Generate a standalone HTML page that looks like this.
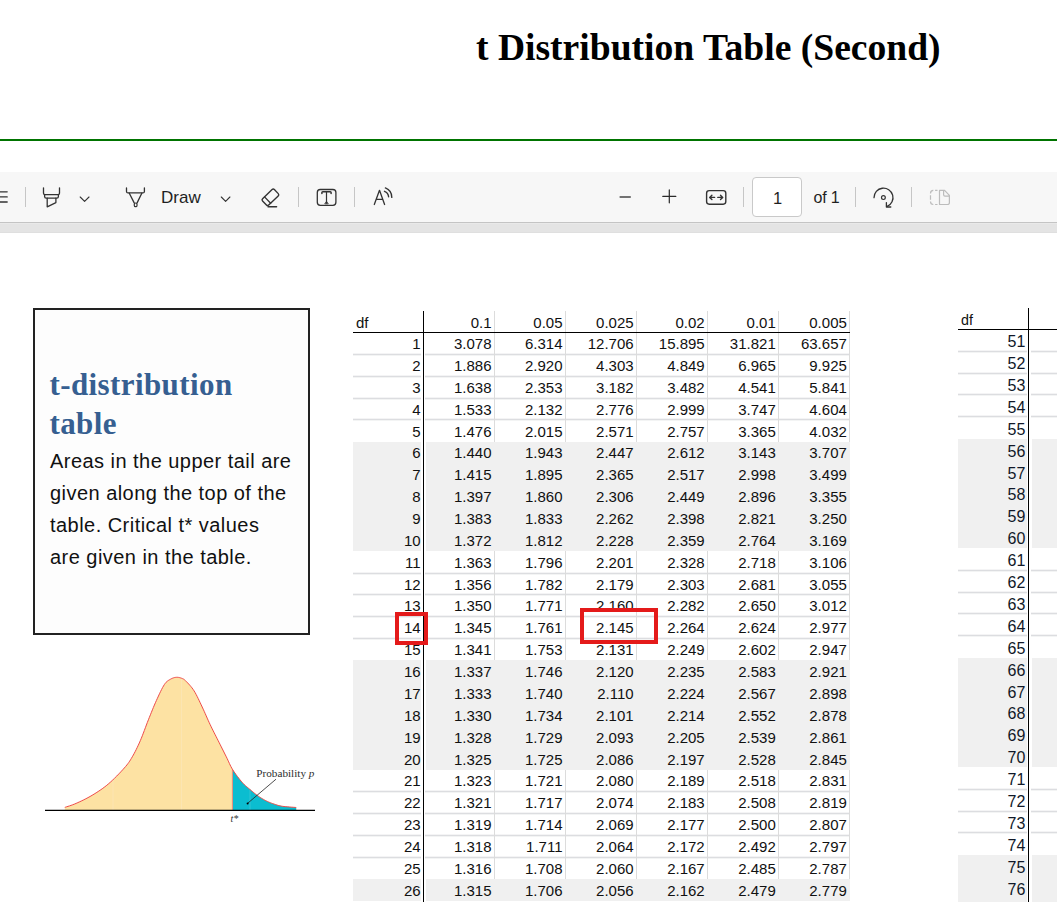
<!DOCTYPE html><html><head><meta charset="utf-8"><title>t Distribution Table (Second)</title><style>
*{margin:0;padding:0;box-sizing:border-box}
html,body{width:1057px;height:902px;overflow:hidden;background:#fff}
body{position:relative;font-family:"Liberation Sans",sans-serif;color:#000}
.a{position:absolute}
.t{position:absolute;white-space:pre;line-height:1}
.sep{position:absolute;width:1px;height:20px;top:187px;background:#c6c6c6}
.cell{position:absolute;white-space:pre;font-size:15px;line-height:16px;text-align:right;color:#111}
</style></head><body>
<div class="t" style="left:476px;top:26px;font:bold 37.6px/43px 'Liberation Serif',serif;color:#000">t Distribution Table (Second)</div>
<div class="a" style="left:0;top:139px;width:1057px;height:2px;background:#007400"></div>
<div class="a" style="left:0;top:172px;width:1057px;height:50px;background:#f7f7f7"></div>
<div class="a" style="left:0;top:222px;width:1057px;height:1px;background:#c4c4c4"></div>
<div class="a" style="left:0;top:223px;width:1057px;height:10px;background:#e4e4e4;border-top:1px solid #e9e9e9;border-bottom:1px solid #dfdfdf"></div>
<svg class="a" style="left:0;top:172px" width="1057" height="50" viewBox="0 172 1057 50" fill="none" stroke="#333333" stroke-width="1.3" stroke-linecap="round" stroke-linejoin="round">
<path d="M-3 191.8H7.2M-3 196.9H7.2M-3 202H7.2"/>
<path d="M43.5 187.8V193.2Q43.5 194.6 45 194.6H58Q59.5 194.6 59.5 193.2V187.8"/>
<path d="M44.6 194.6V196.6Q44.6 198.2 46.2 198.2H56.8Q58.4 198.2 58.4 196.6V194.6"/>
<path d="M47.2 198.2V206.8L55.9 202.6V198.2"/>
<path d="M80.2 197L84.6 201.4L89 197" stroke-width="1.1"/>
<path d="M126.5 187.9V191.4Q126.5 192.9 128 192.9H142.9Q144.4 192.9 144.4 191.4V187.9"/>
<path d="M129.3 193.2L134.2 202.9M141.8 193.2L137.1 202.9"/>
<rect x="134.3" y="203" width="2.7" height="3.7" rx="1.3" stroke-width="1.2"/>
<path d="M221.3 197L225.6 201.3L229.9 197" stroke-width="1.1"/>
<g transform="translate(270.4 197.3) rotate(-44)"><rect x="-8.2" y="-4.4" width="16.4" height="8.8" rx="1.6" stroke-width="1.4"/><path d="M-3.9 -4.4V4.4" stroke-width="1.3"/></g>
<path d="M268 206.8H276.6" stroke-width="1.4"/>
<rect x="317.3" y="189.5" width="18.6" height="15.8" rx="3"/>
<path d="M321.9 193.4V192.6Q321.9 191.7 322.8 191.7H330.3Q331.1 191.7 331.1 192.6V193.4" stroke-width="1.5"/><path d="M326.5 191.7V203.2" stroke-width="1.2"/><path d="M325 203.5L326.5 201.3L328 203.5Z" stroke-width="0.9"/>
<path d="M374.3 204.5L379.5 190.3L384.6 204.5M376.3 199.3H382.6" stroke-width="1.3"/>
<path d="M384.5 191.3A6.4 6.4 0 0 1 388.6 196.7M385.4 187.9A10.2 10.2 0 0 1 391.8 197.4" stroke-width="1.4"/>
<path d="M619.6 197H630.8" stroke="#5a5a5a" stroke-width="1.7" stroke-linecap="butt"/>
<path d="M662.8 196.4H675.8M669.3 189.9V202.8" stroke="#2a2a2a" stroke-width="1.2"/>
<rect x="706.6" y="190.6" width="19.2" height="13.6" rx="2.6" stroke-width="1.4"/>
<path d="M709.8 197.4H714.6M711.9 195.2L709.7 197.4L711.9 199.6M717.8 197.4H722.6M720.5 195.2L722.7 197.4L720.5 199.6" stroke-width="1.4"/>
<path d="M874 197.7A9.5 9.5 0 1 1 887.2 206.4" stroke-width="1.3"/>
<path d="M886.4 202.6V207H890.8" stroke-width="1.3"/>
<circle cx="883.4" cy="197.6" r="1.9" stroke-width="1.2"/>
<path d="M930.5 193.5Q930.5 190.4 933.3 190.4M935.1 190.4H937.5M930.5 195.2V199.8M930.5 201.5Q930.5 204.5 933.3 204.5M935.1 204.5H937.5" stroke="#bcbcbc" stroke-width="1.2" stroke-linecap="butt"/>
<path d="M939.5 190.4H944.6L949.4 195.4V202.4Q949.4 204.5 947.3 204.5H939.5ZM943.6 190.8V194.8Q943.6 196.2 945 196.2H949.2" stroke="#bcbcbc" stroke-width="1.2"/>
</svg>
<div class="sep" style="left:25px"></div>
<div class="sep" style="left:298px"></div>
<div class="sep" style="left:354px"></div>
<div class="sep" style="left:743px"></div>
<div class="sep" style="left:855px"></div>
<div class="sep" style="left:911px"></div>
<div class="t" style="left:161px;top:188px;font-size:17px;line-height:20px;color:#1f1f1f">Draw</div>
<div class="a" style="left:752px;top:177px;width:50px;height:40px;background:#fff;border:1px solid #c9c9c9;border-radius:4px"></div>
<div class="t" style="left:773px;top:188px;font-size:16.5px;line-height:20px;color:#1f1f1f">1</div>
<div class="t" style="left:813.5px;top:188px;font-size:16px;line-height:20px;letter-spacing:-0.15px;color:#1f1f1f">of 1</div>
<div class="a" style="left:33px;top:308px;width:277px;height:326.8px;border:2px solid #222;background:#fdfdfd"></div>
<div class="t" style="left:49.5px;top:365px;font:bold 31px/39px 'Liberation Serif',serif;letter-spacing:0.4px;color:#365f91">t-distribution<br>table</div>
<div class="t" style="left:50px;top:445px;font-size:20px;line-height:32px;letter-spacing:0.46px;color:#111">Areas in the upper tail are<br>given along the top of the<br>table. Critical t* values<br>are given in the table.</div>
<svg class="a" style="left:0;top:660px" width="340" height="170" viewBox="0 660 340 170">
<polygon points="64.8,810 64.80,807.40 65.64,807.12 66.72,806.78 68.00,806.37 69.45,805.91 71.02,805.38 72.68,804.78 74.39,804.12 76.10,803.40 77.87,802.60 79.77,801.74 81.75,800.80 83.80,799.80 85.89,798.74 87.98,797.64 90.06,796.49 92.10,795.30 94.11,794.08 96.12,792.83 98.13,791.54 100.14,790.20 102.16,788.80 104.17,787.32 106.19,785.76 108.20,784.10 110.27,782.29 112.41,780.30 114.59,778.21 116.76,776.05 118.86,773.89 120.84,771.80 122.68,769.81 124.30,768.00 125.69,766.40 126.87,764.97 127.89,763.66 128.81,762.40 129.66,761.14 130.49,759.83 131.36,758.40 132.30,756.80 133.30,755.05 134.30,753.23 135.30,751.33 136.29,749.36 137.29,747.30 138.29,745.18 139.30,742.98 140.30,740.70 141.31,738.31 142.32,735.77 143.33,733.14 144.35,730.45 145.37,727.73 146.38,725.03 147.39,722.37 148.40,719.80 149.40,717.29 150.41,714.79 151.41,712.30 152.41,709.84 153.40,707.43 154.40,705.06 155.40,702.74 156.40,700.50 157.41,698.27 158.44,696.02 159.48,693.79 160.52,691.62 161.54,689.57 162.53,687.67 163.49,685.97 164.40,684.50 165.25,683.30 166.06,682.34 166.84,681.58 167.58,680.97 168.31,680.47 169.03,680.04 169.76,679.63 170.50,679.20 171.25,678.78 172.00,678.42 172.74,678.11 173.48,677.85 174.22,677.64 174.95,677.48 175.68,677.37 176.40,677.30 177.12,677.28 177.86,677.32 178.59,677.41 179.31,677.55 180.02,677.72 180.71,677.93 181.37,678.16 182.00,678.40 182.56,678.63 183.04,678.84 183.48,679.06 183.90,679.32 184.34,679.64 184.84,680.06 185.41,680.60 186.10,681.30 186.91,682.13 187.82,683.08 188.81,684.12 189.85,685.27 190.92,686.53 192.00,687.89 193.07,689.34 194.10,690.90 195.11,692.59 196.12,694.43 197.13,696.39 198.15,698.44 199.17,700.56 200.18,702.71 201.19,704.87 202.20,707.00 203.20,709.15 204.21,711.35 205.21,713.60 206.21,715.86 207.20,718.12 208.20,720.36 209.20,722.56 210.20,724.70 211.20,726.78 212.20,728.82 213.20,730.82 214.19,732.80 215.19,734.77 216.19,736.73 217.20,738.71 218.20,740.70 219.22,742.73 220.26,744.79 221.30,746.87 222.35,748.94 223.38,750.99 224.39,753.00 225.37,754.94 226.30,756.80 227.16,758.57 227.94,760.25 228.68,761.88 229.41,763.46 230.14,765.01 230.91,766.56 231.76,768.11 232.70,769.70 233.76,771.34 234.91,773.04 236.13,774.75 237.39,776.45 238.67,778.11 239.93,779.69 241.15,781.16 242.30,782.50 243.38,783.68 244.43,784.73 245.45,785.68 246.45,786.55 247.44,787.37 248.42,788.17 249.40,788.97 250.40,789.80 251.40,790.65 252.40,791.50 253.40,792.34 254.40,793.16 255.40,793.96 256.40,794.73 257.40,795.48 258.40,796.20 259.41,796.89 260.42,797.55 261.43,798.19 262.45,798.80 263.47,799.39 264.48,799.95 265.49,800.49 266.50,801.00 267.50,801.48 268.51,801.94 269.51,802.37 270.51,802.77 271.50,803.15 272.50,803.51 273.50,803.86 274.50,804.20 275.46,804.52 276.37,804.82 277.25,805.11 278.14,805.38 279.08,805.63 280.10,805.86 281.23,806.09 282.50,806.30 284.03,806.50 285.85,806.69 287.82,806.87 289.85,807.03 291.82,807.18 293.60,807.31 295.10,807.41 296.20,807.50 296.2,810" fill="#fde2a3" stroke="none"/>
<polygon points="232.4,810 232.4,769.19 232.70,769.70 233.76,771.34 234.91,773.04 236.13,774.75 237.39,776.45 238.67,778.11 239.93,779.69 241.15,781.16 242.30,782.50 243.38,783.68 244.43,784.73 245.45,785.68 246.45,786.55 247.44,787.37 248.42,788.17 249.40,788.97 250.40,789.80 251.40,790.65 252.40,791.50 253.40,792.34 254.40,793.16 255.40,793.96 256.40,794.73 257.40,795.48 258.40,796.20 259.41,796.89 260.42,797.55 261.43,798.19 262.45,798.80 263.47,799.39 264.48,799.95 265.49,800.49 266.50,801.00 267.50,801.48 268.51,801.94 269.51,802.37 270.51,802.77 271.50,803.15 272.50,803.51 273.50,803.86 274.50,804.20 275.46,804.52 276.37,804.82 277.25,805.11 278.14,805.38 279.08,805.63 280.10,805.86 281.23,806.09 282.50,806.30 284.03,806.50 285.85,806.69 287.82,806.87 289.85,807.03 291.82,807.18 293.60,807.31 295.10,807.41 296.20,807.50 296.2,810" fill="#0bbdd0" stroke="none"/>
<path d="M113 779.7V810M181.5 678.2V810" stroke="#fbe6b6" stroke-width="0.8"/>
<path d="M250 789.5V810" stroke="#3cc6d6" stroke-width="0.8"/>
<line x1="232.4" y1="769.19" x2="232.4" y2="810" stroke="#f28b7a" stroke-width="1"/>
<polyline points="64.80,807.40 65.64,807.12 66.72,806.78 68.00,806.37 69.45,805.91 71.02,805.38 72.68,804.78 74.39,804.12 76.10,803.40 77.87,802.60 79.77,801.74 81.75,800.80 83.80,799.80 85.89,798.74 87.98,797.64 90.06,796.49 92.10,795.30 94.11,794.08 96.12,792.83 98.13,791.54 100.14,790.20 102.16,788.80 104.17,787.32 106.19,785.76 108.20,784.10 110.27,782.29 112.41,780.30 114.59,778.21 116.76,776.05 118.86,773.89 120.84,771.80 122.68,769.81 124.30,768.00 125.69,766.40 126.87,764.97 127.89,763.66 128.81,762.40 129.66,761.14 130.49,759.83 131.36,758.40 132.30,756.80 133.30,755.05 134.30,753.23 135.30,751.33 136.29,749.36 137.29,747.30 138.29,745.18 139.30,742.98 140.30,740.70 141.31,738.31 142.32,735.77 143.33,733.14 144.35,730.45 145.37,727.73 146.38,725.03 147.39,722.37 148.40,719.80 149.40,717.29 150.41,714.79 151.41,712.30 152.41,709.84 153.40,707.43 154.40,705.06 155.40,702.74 156.40,700.50 157.41,698.27 158.44,696.02 159.48,693.79 160.52,691.62 161.54,689.57 162.53,687.67 163.49,685.97 164.40,684.50 165.25,683.30 166.06,682.34 166.84,681.58 167.58,680.97 168.31,680.47 169.03,680.04 169.76,679.63 170.50,679.20 171.25,678.78 172.00,678.42 172.74,678.11 173.48,677.85 174.22,677.64 174.95,677.48 175.68,677.37 176.40,677.30 177.12,677.28 177.86,677.32 178.59,677.41 179.31,677.55 180.02,677.72 180.71,677.93 181.37,678.16 182.00,678.40 182.56,678.63 183.04,678.84 183.48,679.06 183.90,679.32 184.34,679.64 184.84,680.06 185.41,680.60 186.10,681.30 186.91,682.13 187.82,683.08 188.81,684.12 189.85,685.27 190.92,686.53 192.00,687.89 193.07,689.34 194.10,690.90 195.11,692.59 196.12,694.43 197.13,696.39 198.15,698.44 199.17,700.56 200.18,702.71 201.19,704.87 202.20,707.00 203.20,709.15 204.21,711.35 205.21,713.60 206.21,715.86 207.20,718.12 208.20,720.36 209.20,722.56 210.20,724.70 211.20,726.78 212.20,728.82 213.20,730.82 214.19,732.80 215.19,734.77 216.19,736.73 217.20,738.71 218.20,740.70 219.22,742.73 220.26,744.79 221.30,746.87 222.35,748.94 223.38,750.99 224.39,753.00 225.37,754.94 226.30,756.80 227.16,758.57 227.94,760.25 228.68,761.88 229.41,763.46 230.14,765.01 230.91,766.56 231.76,768.11 232.70,769.70 233.76,771.34 234.91,773.04 236.13,774.75 237.39,776.45 238.67,778.11 239.93,779.69 241.15,781.16 242.30,782.50 243.38,783.68 244.43,784.73 245.45,785.68 246.45,786.55 247.44,787.37 248.42,788.17 249.40,788.97 250.40,789.80 251.40,790.65 252.40,791.50 253.40,792.34 254.40,793.16 255.40,793.96 256.40,794.73 257.40,795.48 258.40,796.20 259.41,796.89 260.42,797.55 261.43,798.19 262.45,798.80 263.47,799.39 264.48,799.95 265.49,800.49 266.50,801.00 267.50,801.48 268.51,801.94 269.51,802.37 270.51,802.77 271.50,803.15 272.50,803.51 273.50,803.86 274.50,804.20 275.46,804.52 276.37,804.82 277.25,805.11 278.14,805.38 279.08,805.63 280.10,805.86 281.23,806.09 282.50,806.30 284.03,806.50 285.85,806.69 287.82,806.87 289.85,807.03 291.82,807.18 293.60,807.31 295.10,807.41 296.20,807.50" fill="none" stroke="#ee4a4a" stroke-width="1"/>
<line x1="45" y1="810.4" x2="315" y2="810.4" stroke="#000" stroke-width="1.1"/>
<line x1="276" y1="779.2" x2="248" y2="803" stroke="#222" stroke-width="0.8"/>
<circle cx="247.6" cy="803.4" r="1" fill="#000"/>
<text x="256.3" y="777.3" font-family="Liberation Serif" font-size="11.2" fill="#2e2e2e">Probability <tspan font-style="italic">p</tspan></text>
<text x="230.4" y="821.5" font-family="Liberation Serif" font-size="10" font-style="italic" fill="#333">t*</text>
</svg>
<div class="a" style="left:353px;top:441.78px;width:496.5px;height:109.35px;background:#f0f0f0"></div>
<div class="a" style="left:421px;top:441.78px;width:5px;height:109.35px;background:#fff"></div>
<div class="a" style="left:353px;top:660.48px;width:496.5px;height:109.35px;background:#f0f0f0"></div>
<div class="a" style="left:421px;top:660.48px;width:5px;height:109.35px;background:#fff"></div>
<div class="a" style="left:353px;top:879.18px;width:496.5px;height:21.87px;background:#f0f0f0"></div>
<div class="a" style="left:421px;top:879.18px;width:5px;height:21.87px;background:#fff"></div>
<div class="a" style="left:353px;top:353.80px;width:67.5px;height:1px;background:#dcdde0;box-shadow:0 -1px 0 #f4f4f5,0 1px 0 #f3f4f4"></div>
<div class="a" style="left:424.5px;top:353.80px;width:425.0px;height:1px;background:#dcdde0;box-shadow:0 -1px 0 #f4f4f5,0 1px 0 #f3f4f4"></div>
<div class="a" style="left:353px;top:375.67px;width:67.5px;height:1px;background:#dcdde0;box-shadow:0 -1px 0 #f4f4f5,0 1px 0 #f3f4f4"></div>
<div class="a" style="left:424.5px;top:375.67px;width:425.0px;height:1px;background:#dcdde0;box-shadow:0 -1px 0 #f4f4f5,0 1px 0 #f3f4f4"></div>
<div class="a" style="left:353px;top:397.54px;width:67.5px;height:1px;background:#dcdde0;box-shadow:0 -1px 0 #f4f4f5,0 1px 0 #f3f4f4"></div>
<div class="a" style="left:424.5px;top:397.54px;width:425.0px;height:1px;background:#dcdde0;box-shadow:0 -1px 0 #f4f4f5,0 1px 0 #f3f4f4"></div>
<div class="a" style="left:353px;top:419.41px;width:67.5px;height:1px;background:#dcdde0;box-shadow:0 -1px 0 #f4f4f5,0 1px 0 #f3f4f4"></div>
<div class="a" style="left:424.5px;top:419.41px;width:425.0px;height:1px;background:#dcdde0;box-shadow:0 -1px 0 #f4f4f5,0 1px 0 #f3f4f4"></div>
<div class="a" style="left:493.57px;top:311.00px;width:1px;height:130.78px;background:#dcdcdc"></div>
<div class="a" style="left:564.64px;top:311.00px;width:1px;height:130.78px;background:#dcdcdc"></div>
<div class="a" style="left:635.71px;top:311.00px;width:1px;height:130.78px;background:#dcdcdc"></div>
<div class="a" style="left:706.78px;top:311.00px;width:1px;height:130.78px;background:#dcdcdc"></div>
<div class="a" style="left:777.85px;top:311.00px;width:1px;height:130.78px;background:#dcdcdc"></div>
<div class="a" style="left:848.92px;top:311.00px;width:1px;height:130.78px;background:#dcdcdc"></div>
<div class="a" style="left:353px;top:572.50px;width:67.5px;height:1px;background:#dcdde0;box-shadow:0 -1px 0 #f4f4f5,0 1px 0 #f3f4f4"></div>
<div class="a" style="left:424.5px;top:572.50px;width:425.0px;height:1px;background:#dcdde0;box-shadow:0 -1px 0 #f4f4f5,0 1px 0 #f3f4f4"></div>
<div class="a" style="left:353px;top:594.37px;width:67.5px;height:1px;background:#dcdde0;box-shadow:0 -1px 0 #f4f4f5,0 1px 0 #f3f4f4"></div>
<div class="a" style="left:424.5px;top:594.37px;width:425.0px;height:1px;background:#dcdde0;box-shadow:0 -1px 0 #f4f4f5,0 1px 0 #f3f4f4"></div>
<div class="a" style="left:353px;top:616.24px;width:67.5px;height:1px;background:#dcdde0;box-shadow:0 -1px 0 #f4f4f5,0 1px 0 #f3f4f4"></div>
<div class="a" style="left:424.5px;top:616.24px;width:425.0px;height:1px;background:#dcdde0;box-shadow:0 -1px 0 #f4f4f5,0 1px 0 #f3f4f4"></div>
<div class="a" style="left:353px;top:638.11px;width:67.5px;height:1px;background:#dcdde0;box-shadow:0 -1px 0 #f4f4f5,0 1px 0 #f3f4f4"></div>
<div class="a" style="left:424.5px;top:638.11px;width:425.0px;height:1px;background:#dcdde0;box-shadow:0 -1px 0 #f4f4f5,0 1px 0 #f3f4f4"></div>
<div class="a" style="left:493.57px;top:551.13px;width:1px;height:109.35px;background:#dcdcdc"></div>
<div class="a" style="left:564.64px;top:551.13px;width:1px;height:109.35px;background:#dcdcdc"></div>
<div class="a" style="left:635.71px;top:551.13px;width:1px;height:109.35px;background:#dcdcdc"></div>
<div class="a" style="left:706.78px;top:551.13px;width:1px;height:109.35px;background:#dcdcdc"></div>
<div class="a" style="left:777.85px;top:551.13px;width:1px;height:109.35px;background:#dcdcdc"></div>
<div class="a" style="left:848.92px;top:551.13px;width:1px;height:109.35px;background:#dcdcdc"></div>
<div class="a" style="left:353px;top:791.20px;width:67.5px;height:1px;background:#dcdde0;box-shadow:0 -1px 0 #f4f4f5,0 1px 0 #f3f4f4"></div>
<div class="a" style="left:424.5px;top:791.20px;width:425.0px;height:1px;background:#dcdde0;box-shadow:0 -1px 0 #f4f4f5,0 1px 0 #f3f4f4"></div>
<div class="a" style="left:353px;top:813.07px;width:67.5px;height:1px;background:#dcdde0;box-shadow:0 -1px 0 #f4f4f5,0 1px 0 #f3f4f4"></div>
<div class="a" style="left:424.5px;top:813.07px;width:425.0px;height:1px;background:#dcdde0;box-shadow:0 -1px 0 #f4f4f5,0 1px 0 #f3f4f4"></div>
<div class="a" style="left:353px;top:834.94px;width:67.5px;height:1px;background:#dcdde0;box-shadow:0 -1px 0 #f4f4f5,0 1px 0 #f3f4f4"></div>
<div class="a" style="left:424.5px;top:834.94px;width:425.0px;height:1px;background:#dcdde0;box-shadow:0 -1px 0 #f4f4f5,0 1px 0 #f3f4f4"></div>
<div class="a" style="left:353px;top:856.81px;width:67.5px;height:1px;background:#dcdde0;box-shadow:0 -1px 0 #f4f4f5,0 1px 0 #f3f4f4"></div>
<div class="a" style="left:424.5px;top:856.81px;width:425.0px;height:1px;background:#dcdde0;box-shadow:0 -1px 0 #f4f4f5,0 1px 0 #f3f4f4"></div>
<div class="a" style="left:493.57px;top:769.83px;width:1px;height:109.35px;background:#dcdcdc"></div>
<div class="a" style="left:564.64px;top:769.83px;width:1px;height:109.35px;background:#dcdcdc"></div>
<div class="a" style="left:635.71px;top:769.83px;width:1px;height:109.35px;background:#dcdcdc"></div>
<div class="a" style="left:706.78px;top:769.83px;width:1px;height:109.35px;background:#dcdcdc"></div>
<div class="a" style="left:777.85px;top:769.83px;width:1px;height:109.35px;background:#dcdcdc"></div>
<div class="a" style="left:848.92px;top:769.83px;width:1px;height:109.35px;background:#dcdcdc"></div>
<div class="a" style="left:353px;top:332px;width:496.5px;height:1.3px;background:#000"></div>
<div class="a" style="left:422.6px;top:311px;width:1.3px;height:591px;background:#000"></div>
<div class="cell" style="left:356px;top:315px;text-align:left">df</div>
<div class="cell" style="right:565.53px;top:315px">0.1</div>
<div class="cell" style="right:494.46px;top:315px">0.05</div>
<div class="cell" style="right:423.39px;top:315px">0.025</div>
<div class="cell" style="right:352.32px;top:315px">0.02</div>
<div class="cell" style="right:281.25px;top:315px">0.01</div>
<div class="cell" style="right:210.18px;top:315px">0.005</div>
<div class="cell" style="right:636.40px;top:336.03px">1</div>
<div class="cell" style="right:565.53px;top:336.03px">3.078</div>
<div class="cell" style="right:494.46px;top:336.03px">6.314</div>
<div class="cell" style="right:423.39px;top:336.03px">12.706</div>
<div class="cell" style="right:352.32px;top:336.03px">15.895</div>
<div class="cell" style="right:281.25px;top:336.03px">31.821</div>
<div class="cell" style="right:210.18px;top:336.03px">63.657</div>
<div class="cell" style="right:636.40px;top:357.90px">2</div>
<div class="cell" style="right:565.53px;top:357.90px">1.886</div>
<div class="cell" style="right:494.46px;top:357.90px">2.920</div>
<div class="cell" style="right:423.39px;top:357.90px">4.303</div>
<div class="cell" style="right:352.32px;top:357.90px">4.849</div>
<div class="cell" style="right:281.25px;top:357.90px">6.965</div>
<div class="cell" style="right:210.18px;top:357.90px">9.925</div>
<div class="cell" style="right:636.40px;top:379.77px">3</div>
<div class="cell" style="right:565.53px;top:379.77px">1.638</div>
<div class="cell" style="right:494.46px;top:379.77px">2.353</div>
<div class="cell" style="right:423.39px;top:379.77px">3.182</div>
<div class="cell" style="right:352.32px;top:379.77px">3.482</div>
<div class="cell" style="right:281.25px;top:379.77px">4.541</div>
<div class="cell" style="right:210.18px;top:379.77px">5.841</div>
<div class="cell" style="right:636.40px;top:401.64px">4</div>
<div class="cell" style="right:565.53px;top:401.64px">1.533</div>
<div class="cell" style="right:494.46px;top:401.64px">2.132</div>
<div class="cell" style="right:423.39px;top:401.64px">2.776</div>
<div class="cell" style="right:352.32px;top:401.64px">2.999</div>
<div class="cell" style="right:281.25px;top:401.64px">3.747</div>
<div class="cell" style="right:210.18px;top:401.64px">4.604</div>
<div class="cell" style="right:636.40px;top:423.51px">5</div>
<div class="cell" style="right:565.53px;top:423.51px">1.476</div>
<div class="cell" style="right:494.46px;top:423.51px">2.015</div>
<div class="cell" style="right:423.39px;top:423.51px">2.571</div>
<div class="cell" style="right:352.32px;top:423.51px">2.757</div>
<div class="cell" style="right:281.25px;top:423.51px">3.365</div>
<div class="cell" style="right:210.18px;top:423.51px">4.032</div>
<div class="cell" style="right:636.40px;top:445.38px">6</div>
<div class="cell" style="right:565.53px;top:445.38px">1.440</div>
<div class="cell" style="right:494.46px;top:445.38px">1.943</div>
<div class="cell" style="right:423.39px;top:445.38px">2.447</div>
<div class="cell" style="right:352.32px;top:445.38px">2.612</div>
<div class="cell" style="right:281.25px;top:445.38px">3.143</div>
<div class="cell" style="right:210.18px;top:445.38px">3.707</div>
<div class="cell" style="right:636.40px;top:467.25px">7</div>
<div class="cell" style="right:565.53px;top:467.25px">1.415</div>
<div class="cell" style="right:494.46px;top:467.25px">1.895</div>
<div class="cell" style="right:423.39px;top:467.25px">2.365</div>
<div class="cell" style="right:352.32px;top:467.25px">2.517</div>
<div class="cell" style="right:281.25px;top:467.25px">2.998</div>
<div class="cell" style="right:210.18px;top:467.25px">3.499</div>
<div class="cell" style="right:636.40px;top:489.12px">8</div>
<div class="cell" style="right:565.53px;top:489.12px">1.397</div>
<div class="cell" style="right:494.46px;top:489.12px">1.860</div>
<div class="cell" style="right:423.39px;top:489.12px">2.306</div>
<div class="cell" style="right:352.32px;top:489.12px">2.449</div>
<div class="cell" style="right:281.25px;top:489.12px">2.896</div>
<div class="cell" style="right:210.18px;top:489.12px">3.355</div>
<div class="cell" style="right:636.40px;top:510.99px">9</div>
<div class="cell" style="right:565.53px;top:510.99px">1.383</div>
<div class="cell" style="right:494.46px;top:510.99px">1.833</div>
<div class="cell" style="right:423.39px;top:510.99px">2.262</div>
<div class="cell" style="right:352.32px;top:510.99px">2.398</div>
<div class="cell" style="right:281.25px;top:510.99px">2.821</div>
<div class="cell" style="right:210.18px;top:510.99px">3.250</div>
<div class="cell" style="right:636.40px;top:532.86px">10</div>
<div class="cell" style="right:565.53px;top:532.86px">1.372</div>
<div class="cell" style="right:494.46px;top:532.86px">1.812</div>
<div class="cell" style="right:423.39px;top:532.86px">2.228</div>
<div class="cell" style="right:352.32px;top:532.86px">2.359</div>
<div class="cell" style="right:281.25px;top:532.86px">2.764</div>
<div class="cell" style="right:210.18px;top:532.86px">3.169</div>
<div class="cell" style="right:636.40px;top:554.73px">11</div>
<div class="cell" style="right:565.53px;top:554.73px">1.363</div>
<div class="cell" style="right:494.46px;top:554.73px">1.796</div>
<div class="cell" style="right:423.39px;top:554.73px">2.201</div>
<div class="cell" style="right:352.32px;top:554.73px">2.328</div>
<div class="cell" style="right:281.25px;top:554.73px">2.718</div>
<div class="cell" style="right:210.18px;top:554.73px">3.106</div>
<div class="cell" style="right:636.40px;top:576.60px">12</div>
<div class="cell" style="right:565.53px;top:576.60px">1.356</div>
<div class="cell" style="right:494.46px;top:576.60px">1.782</div>
<div class="cell" style="right:423.39px;top:576.60px">2.179</div>
<div class="cell" style="right:352.32px;top:576.60px">2.303</div>
<div class="cell" style="right:281.25px;top:576.60px">2.681</div>
<div class="cell" style="right:210.18px;top:576.60px">3.055</div>
<div class="cell" style="right:636.40px;top:598.47px">13</div>
<div class="cell" style="right:565.53px;top:598.47px">1.350</div>
<div class="cell" style="right:494.46px;top:598.47px">1.771</div>
<div class="cell" style="right:423.39px;top:598.47px">2.160</div>
<div class="cell" style="right:352.32px;top:598.47px">2.282</div>
<div class="cell" style="right:281.25px;top:598.47px">2.650</div>
<div class="cell" style="right:210.18px;top:598.47px">3.012</div>
<div class="cell" style="right:636.40px;top:620.34px">14</div>
<div class="cell" style="right:565.53px;top:620.34px">1.345</div>
<div class="cell" style="right:494.46px;top:620.34px">1.761</div>
<div class="cell" style="right:423.39px;top:620.34px">2.145</div>
<div class="cell" style="right:352.32px;top:620.34px">2.264</div>
<div class="cell" style="right:281.25px;top:620.34px">2.624</div>
<div class="cell" style="right:210.18px;top:620.34px">2.977</div>
<div class="cell" style="right:636.40px;top:642.21px">15</div>
<div class="cell" style="right:565.53px;top:642.21px">1.341</div>
<div class="cell" style="right:494.46px;top:642.21px">1.753</div>
<div class="cell" style="right:423.39px;top:642.21px">2.131</div>
<div class="cell" style="right:352.32px;top:642.21px">2.249</div>
<div class="cell" style="right:281.25px;top:642.21px">2.602</div>
<div class="cell" style="right:210.18px;top:642.21px">2.947</div>
<div class="cell" style="right:636.40px;top:664.08px">16</div>
<div class="cell" style="right:565.53px;top:664.08px">1.337</div>
<div class="cell" style="right:494.46px;top:664.08px">1.746</div>
<div class="cell" style="right:423.39px;top:664.08px">2.120</div>
<div class="cell" style="right:352.32px;top:664.08px">2.235</div>
<div class="cell" style="right:281.25px;top:664.08px">2.583</div>
<div class="cell" style="right:210.18px;top:664.08px">2.921</div>
<div class="cell" style="right:636.40px;top:685.95px">17</div>
<div class="cell" style="right:565.53px;top:685.95px">1.333</div>
<div class="cell" style="right:494.46px;top:685.95px">1.740</div>
<div class="cell" style="right:423.39px;top:685.95px">2.110</div>
<div class="cell" style="right:352.32px;top:685.95px">2.224</div>
<div class="cell" style="right:281.25px;top:685.95px">2.567</div>
<div class="cell" style="right:210.18px;top:685.95px">2.898</div>
<div class="cell" style="right:636.40px;top:707.82px">18</div>
<div class="cell" style="right:565.53px;top:707.82px">1.330</div>
<div class="cell" style="right:494.46px;top:707.82px">1.734</div>
<div class="cell" style="right:423.39px;top:707.82px">2.101</div>
<div class="cell" style="right:352.32px;top:707.82px">2.214</div>
<div class="cell" style="right:281.25px;top:707.82px">2.552</div>
<div class="cell" style="right:210.18px;top:707.82px">2.878</div>
<div class="cell" style="right:636.40px;top:729.69px">19</div>
<div class="cell" style="right:565.53px;top:729.69px">1.328</div>
<div class="cell" style="right:494.46px;top:729.69px">1.729</div>
<div class="cell" style="right:423.39px;top:729.69px">2.093</div>
<div class="cell" style="right:352.32px;top:729.69px">2.205</div>
<div class="cell" style="right:281.25px;top:729.69px">2.539</div>
<div class="cell" style="right:210.18px;top:729.69px">2.861</div>
<div class="cell" style="right:636.40px;top:751.56px">20</div>
<div class="cell" style="right:565.53px;top:751.56px">1.325</div>
<div class="cell" style="right:494.46px;top:751.56px">1.725</div>
<div class="cell" style="right:423.39px;top:751.56px">2.086</div>
<div class="cell" style="right:352.32px;top:751.56px">2.197</div>
<div class="cell" style="right:281.25px;top:751.56px">2.528</div>
<div class="cell" style="right:210.18px;top:751.56px">2.845</div>
<div class="cell" style="right:636.40px;top:773.43px">21</div>
<div class="cell" style="right:565.53px;top:773.43px">1.323</div>
<div class="cell" style="right:494.46px;top:773.43px">1.721</div>
<div class="cell" style="right:423.39px;top:773.43px">2.080</div>
<div class="cell" style="right:352.32px;top:773.43px">2.189</div>
<div class="cell" style="right:281.25px;top:773.43px">2.518</div>
<div class="cell" style="right:210.18px;top:773.43px">2.831</div>
<div class="cell" style="right:636.40px;top:795.30px">22</div>
<div class="cell" style="right:565.53px;top:795.30px">1.321</div>
<div class="cell" style="right:494.46px;top:795.30px">1.717</div>
<div class="cell" style="right:423.39px;top:795.30px">2.074</div>
<div class="cell" style="right:352.32px;top:795.30px">2.183</div>
<div class="cell" style="right:281.25px;top:795.30px">2.508</div>
<div class="cell" style="right:210.18px;top:795.30px">2.819</div>
<div class="cell" style="right:636.40px;top:817.17px">23</div>
<div class="cell" style="right:565.53px;top:817.17px">1.319</div>
<div class="cell" style="right:494.46px;top:817.17px">1.714</div>
<div class="cell" style="right:423.39px;top:817.17px">2.069</div>
<div class="cell" style="right:352.32px;top:817.17px">2.177</div>
<div class="cell" style="right:281.25px;top:817.17px">2.500</div>
<div class="cell" style="right:210.18px;top:817.17px">2.807</div>
<div class="cell" style="right:636.40px;top:839.04px">24</div>
<div class="cell" style="right:565.53px;top:839.04px">1.318</div>
<div class="cell" style="right:494.46px;top:839.04px">1.711</div>
<div class="cell" style="right:423.39px;top:839.04px">2.064</div>
<div class="cell" style="right:352.32px;top:839.04px">2.172</div>
<div class="cell" style="right:281.25px;top:839.04px">2.492</div>
<div class="cell" style="right:210.18px;top:839.04px">2.797</div>
<div class="cell" style="right:636.40px;top:860.91px">25</div>
<div class="cell" style="right:565.53px;top:860.91px">1.316</div>
<div class="cell" style="right:494.46px;top:860.91px">1.708</div>
<div class="cell" style="right:423.39px;top:860.91px">2.060</div>
<div class="cell" style="right:352.32px;top:860.91px">2.167</div>
<div class="cell" style="right:281.25px;top:860.91px">2.485</div>
<div class="cell" style="right:210.18px;top:860.91px">2.787</div>
<div class="cell" style="right:636.40px;top:882.78px">26</div>
<div class="cell" style="right:565.53px;top:882.78px">1.315</div>
<div class="cell" style="right:494.46px;top:882.78px">1.706</div>
<div class="cell" style="right:423.39px;top:882.78px">2.056</div>
<div class="cell" style="right:352.32px;top:882.78px">2.162</div>
<div class="cell" style="right:281.25px;top:882.78px">2.479</div>
<div class="cell" style="right:210.18px;top:882.78px">2.779</div>
<div class="a" style="left:395.4px;top:612px;width:32.3px;height:32.6px;border:4px solid #e41a1a"></div>
<div class="a" style="left:580px;top:608px;width:77.8px;height:35.7px;border:4px solid #e41a1a"></div>
<div class="a" style="left:958px;top:438.70px;width:99px;height:109.50px;background:#f0f0f0"></div>
<div class="a" style="left:1026.5px;top:438.70px;width:5px;height:109.50px;background:#fff"></div>
<div class="a" style="left:958px;top:657.70px;width:99px;height:109.50px;background:#f0f0f0"></div>
<div class="a" style="left:1026.5px;top:657.70px;width:5px;height:109.50px;background:#fff"></div>
<div class="a" style="left:958px;top:854.80px;width:99px;height:47.20px;background:#f0f0f0"></div>
<div class="a" style="left:1026.5px;top:854.80px;width:5px;height:47.20px;background:#fff"></div>
<div class="a" style="left:958px;top:350.60px;width:68.5px;height:1px;background:#dcdde0;box-shadow:0 -1px 0 #f4f4f5,0 1px 0 #f3f4f4"></div>
<div class="a" style="left:1030.5px;top:350.60px;width:26.5px;height:1px;background:#dcdde0;box-shadow:0 -1px 0 #f4f4f5,0 1px 0 #f3f4f4"></div>
<div class="a" style="left:958px;top:372.50px;width:68.5px;height:1px;background:#dcdde0;box-shadow:0 -1px 0 #f4f4f5,0 1px 0 #f3f4f4"></div>
<div class="a" style="left:1030.5px;top:372.50px;width:26.5px;height:1px;background:#dcdde0;box-shadow:0 -1px 0 #f4f4f5,0 1px 0 #f3f4f4"></div>
<div class="a" style="left:958px;top:394.40px;width:68.5px;height:1px;background:#dcdde0;box-shadow:0 -1px 0 #f4f4f5,0 1px 0 #f3f4f4"></div>
<div class="a" style="left:1030.5px;top:394.40px;width:26.5px;height:1px;background:#dcdde0;box-shadow:0 -1px 0 #f4f4f5,0 1px 0 #f3f4f4"></div>
<div class="a" style="left:958px;top:416.30px;width:68.5px;height:1px;background:#dcdde0;box-shadow:0 -1px 0 #f4f4f5,0 1px 0 #f3f4f4"></div>
<div class="a" style="left:1030.5px;top:416.30px;width:26.5px;height:1px;background:#dcdde0;box-shadow:0 -1px 0 #f4f4f5,0 1px 0 #f3f4f4"></div>
<div class="a" style="left:958px;top:569.60px;width:68.5px;height:1px;background:#dcdde0;box-shadow:0 -1px 0 #f4f4f5,0 1px 0 #f3f4f4"></div>
<div class="a" style="left:1030.5px;top:569.60px;width:26.5px;height:1px;background:#dcdde0;box-shadow:0 -1px 0 #f4f4f5,0 1px 0 #f3f4f4"></div>
<div class="a" style="left:958px;top:591.50px;width:68.5px;height:1px;background:#dcdde0;box-shadow:0 -1px 0 #f4f4f5,0 1px 0 #f3f4f4"></div>
<div class="a" style="left:1030.5px;top:591.50px;width:26.5px;height:1px;background:#dcdde0;box-shadow:0 -1px 0 #f4f4f5,0 1px 0 #f3f4f4"></div>
<div class="a" style="left:958px;top:613.40px;width:68.5px;height:1px;background:#dcdde0;box-shadow:0 -1px 0 #f4f4f5,0 1px 0 #f3f4f4"></div>
<div class="a" style="left:1030.5px;top:613.40px;width:26.5px;height:1px;background:#dcdde0;box-shadow:0 -1px 0 #f4f4f5,0 1px 0 #f3f4f4"></div>
<div class="a" style="left:958px;top:635.30px;width:68.5px;height:1px;background:#dcdde0;box-shadow:0 -1px 0 #f4f4f5,0 1px 0 #f3f4f4"></div>
<div class="a" style="left:1030.5px;top:635.30px;width:26.5px;height:1px;background:#dcdde0;box-shadow:0 -1px 0 #f4f4f5,0 1px 0 #f3f4f4"></div>
<div class="a" style="left:958px;top:788.60px;width:68.5px;height:1px;background:#dcdde0;box-shadow:0 -1px 0 #f4f4f5,0 1px 0 #f3f4f4"></div>
<div class="a" style="left:1030.5px;top:788.60px;width:26.5px;height:1px;background:#dcdde0;box-shadow:0 -1px 0 #f4f4f5,0 1px 0 #f3f4f4"></div>
<div class="a" style="left:958px;top:810.50px;width:68.5px;height:1px;background:#dcdde0;box-shadow:0 -1px 0 #f4f4f5,0 1px 0 #f3f4f4"></div>
<div class="a" style="left:1030.5px;top:810.50px;width:26.5px;height:1px;background:#dcdde0;box-shadow:0 -1px 0 #f4f4f5,0 1px 0 #f3f4f4"></div>
<div class="a" style="left:958px;top:832.40px;width:68.5px;height:1px;background:#dcdde0;box-shadow:0 -1px 0 #f4f4f5,0 1px 0 #f3f4f4"></div>
<div class="a" style="left:1030.5px;top:832.40px;width:26.5px;height:1px;background:#dcdde0;box-shadow:0 -1px 0 #f4f4f5,0 1px 0 #f3f4f4"></div>
<div class="a" style="left:958px;top:328.5px;width:99px;height:1.2px;background:#000"></div>
<div class="a" style="left:1028.1px;top:308px;width:1.3px;height:594px;background:#000"></div>
<div class="cell" style="left:961px;top:312px;text-align:left;font-size:14.3px">df</div>
<div class="cell" style="right:31.70px;top:334.10px;font-size:16px;color:#101828">51</div>
<div class="cell" style="right:31.70px;top:356.00px;font-size:16px;color:#101828">52</div>
<div class="cell" style="right:31.70px;top:377.90px;font-size:16px;color:#101828">53</div>
<div class="cell" style="right:31.70px;top:399.80px;font-size:16px;color:#101828">54</div>
<div class="cell" style="right:31.70px;top:421.70px;font-size:16px;color:#101828">55</div>
<div class="cell" style="right:31.70px;top:443.60px;font-size:16px;color:#101828">56</div>
<div class="cell" style="right:31.70px;top:465.50px;font-size:16px;color:#101828">57</div>
<div class="cell" style="right:31.70px;top:487.40px;font-size:16px;color:#101828">58</div>
<div class="cell" style="right:31.70px;top:509.30px;font-size:16px;color:#101828">59</div>
<div class="cell" style="right:31.70px;top:531.20px;font-size:16px;color:#101828">60</div>
<div class="cell" style="right:31.70px;top:553.10px;font-size:16px;color:#101828">61</div>
<div class="cell" style="right:31.70px;top:575.00px;font-size:16px;color:#101828">62</div>
<div class="cell" style="right:31.70px;top:596.90px;font-size:16px;color:#101828">63</div>
<div class="cell" style="right:31.70px;top:618.80px;font-size:16px;color:#101828">64</div>
<div class="cell" style="right:31.70px;top:640.70px;font-size:16px;color:#101828">65</div>
<div class="cell" style="right:31.70px;top:662.60px;font-size:16px;color:#101828">66</div>
<div class="cell" style="right:31.70px;top:684.50px;font-size:16px;color:#101828">67</div>
<div class="cell" style="right:31.70px;top:706.40px;font-size:16px;color:#101828">68</div>
<div class="cell" style="right:31.70px;top:728.30px;font-size:16px;color:#101828">69</div>
<div class="cell" style="right:31.70px;top:750.20px;font-size:16px;color:#101828">70</div>
<div class="cell" style="right:31.70px;top:772.10px;font-size:16px;color:#101828">71</div>
<div class="cell" style="right:31.70px;top:794.00px;font-size:16px;color:#101828">72</div>
<div class="cell" style="right:31.70px;top:815.90px;font-size:16px;color:#101828">73</div>
<div class="cell" style="right:31.70px;top:837.80px;font-size:16px;color:#101828">74</div>
<div class="cell" style="right:31.70px;top:859.70px;font-size:16px;color:#101828">75</div>
<div class="cell" style="right:31.70px;top:881.60px;font-size:16px;color:#101828">76</div>
</body></html>
